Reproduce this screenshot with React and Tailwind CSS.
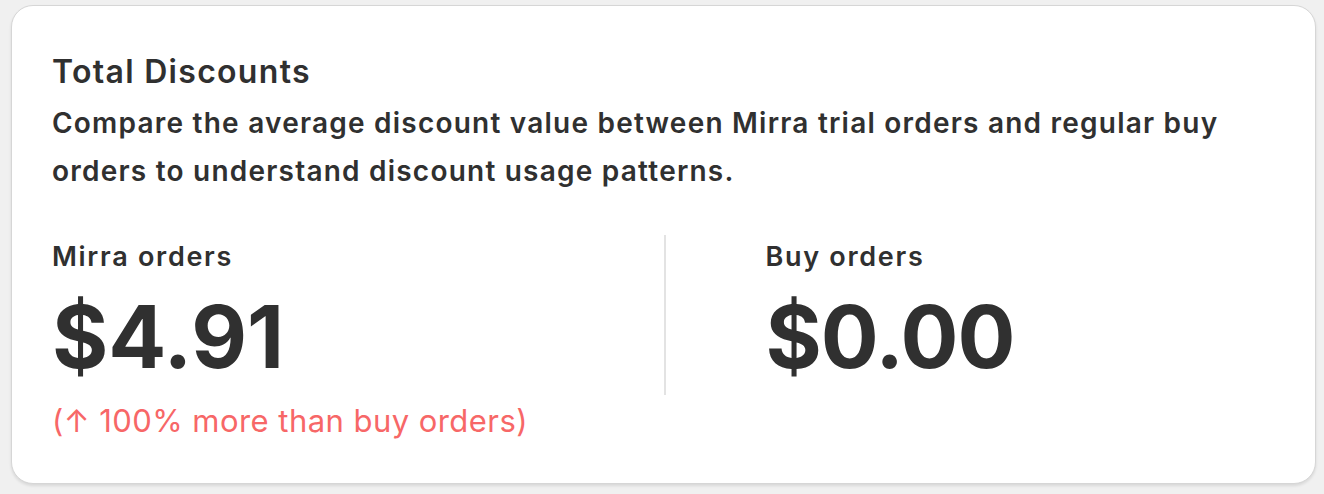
export default function App() {
  return (
    <div
      className="w-[1324px] h-[494px] bg-[#f0f0f0] pt-[5px] pl-[11px] pr-[8px]"
      style={{ fontFamily: "Inter, 'Noto Sans', sans-serif" }}
    >
      <div className="h-[479px] bg-white border border-[#d6d6d6] rounded-[22px] shadow-[0_2px_3px_rgba(0,0,0,0.10)] pt-[46px] px-[40px] text-[#303030]">
        <h2 className="text-[32px] leading-[40px] font-semibold tracking-[1.3px]">Total Discounts</h2>
        <p className="mt-[7px] text-[28px] leading-[48px] font-semibold tracking-[1.22px] pr-[10px]">
          Compare the average discount value between Mirra trial orders and regular buy orders to understand discount usage patterns.
        </p>
        <div className="mt-[42px] grid grid-cols-2">
          <div>
            <div className="text-[27px] leading-[40px] font-semibold tracking-[1.7px]">Mirra orders</div>
            <div className="mt-[17px] text-[86px] leading-[86px] font-bold">$4.91</div>
            <div className="mt-[21px] text-[31px] leading-[40px] tracking-[0.45px] text-[#f76767]">(↑ 100% more than buy orders)</div>
          </div>
          <div className="flex items-start">
            <div className="-mt-[2px] w-[2px] h-[160px] bg-[#e3e3e3]" />
            <div className="pl-[100px]">
              <div className="text-[27px] leading-[40px] font-semibold tracking-[1.7px]">Buy orders</div>
              <div className="mt-[17px] text-[86px] leading-[86px] font-bold tracking-[-1px]">$0.00</div>
            </div>
          </div>
        </div>
      </div>
    </div>
  );
}
